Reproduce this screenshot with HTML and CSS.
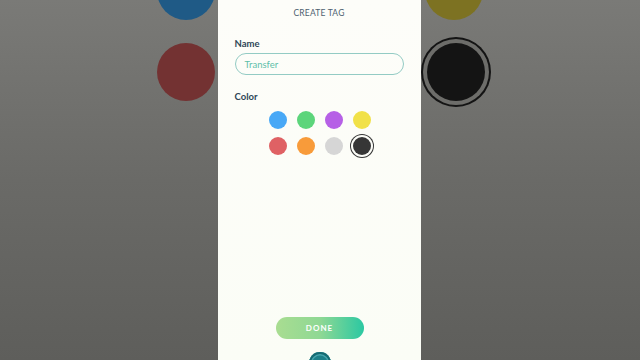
FILE: index.html
```html
<!DOCTYPE html>
<html>
<head>
<meta charset="utf-8">
<link rel="stylesheet" href="styles.css">
</head>
<body>
<div class="backdrop">
  <span class="bg-dot bg-blue"></span>
  <span class="bg-dot bg-red"></span>
  <span class="bg-dot bg-yellow"></span>
  <span class="bg-dot bg-black"></span>
</div>
<div class="sheet">
  <div class="title">CREATE TAG</div>
  <label class="label">Name</label>
  <div class="input">Transfer</div>
  <label class="label color-label">Color</label>
  <div class="swatches">
    <span class="sw blue"></span>
    <span class="sw green"></span>
    <span class="sw purple"></span>
    <span class="sw yellow"></span>
    <span class="sw red"></span>
    <span class="sw orange"></span>
    <span class="sw gray"></span>
    <span class="sw black selected"></span>
  </div>
  <div class="spacer"></div>
  <button class="done">DONE</button>
  <div class="bottom-btn"></div>
</div>
</body>
</html>
```
FILE: styles.css
```css
html, body {
  margin: 0;
  padding: 0;
  width: 640px;
  height: 360px;
  overflow: hidden;
}
body {
  background: linear-gradient(#7a7a77, #6a6a67 50%, #5e5e5b);
  font-family: Lato, "Noto Sans", sans-serif;
  display: flex;
  justify-content: center;
  position: relative;
}
.backdrop {
  position: absolute;
  inset: 0;
}
.bg-dot {
  position: absolute;
  width: 58px;
  height: 58px;
  border-radius: 50%;
}
.bg-blue { left: 157px; top: -38px; background: #1f5a86; }
.bg-red { left: 157px; top: 43px; background: #733232; }
.bg-yellow { left: 425px; top: -38px; background: #7d7222; }
.bg-black {
  left: 427px; top: 43px; background: #141414;
  box-shadow: 0 0 0 4px #6d6d6a, 0 0 0 6px #141414;
}
.sheet {
  position: relative;
  width: 203px;
  margin-left: -2px;
  height: 360px;
  background: linear-gradient(#fdfdf9, #fbfdf6);
  display: flex;
  flex-direction: column;
  box-sizing: border-box;
  padding: 0 17px;
}
.title {
  text-align: center;
  font-size: 8.5px;
  color: #4d6170;
  letter-spacing: 0.2px;
  margin-top: 8px;
  line-height: 11px;
}
.label {
  font-size: 9.5px;
  font-weight: 700;
  color: #2e4657;
  margin-top: 19px;
  line-height: 11px;
}
.color-label { margin-top: 16px; }
.input {
  margin-top: 4px;
  height: 22px;
  box-sizing: border-box;
  border: 1.5px solid #93cbc4;
  border-radius: 11px;
  font-size: 9.5px;
  color: #5fbfa9;
  padding-left: 9px;
  display: flex;
  align-items: center;
}
.swatches {
  display: grid;
  grid-template-columns: repeat(4, 18px);
  column-gap: 10px;
  row-gap: 8px;
  justify-content: center;
  margin-top: 9px;
  margin-left: 1px;
}
.sw {
  width: 18px;
  height: 18px;
  border-radius: 50%;
}
.blue { background: #48a8f6; }
.green { background: #5cd57b; }
.purple { background: #b660e6; }
.yellow { background: #f1e148; }
.red { background: #df6164; }
.orange { background: #f89b3a; }
.gray { background: #d6d6d6; }
.black {
  background: #363636;
  box-shadow: 0 0 0 2px #fcfdf8, 0 0 0 3px #363636;
}
.spacer { flex: 1; }
.done {
  align-self: center;
  width: 88px;
  height: 22px;
  border: none;
  border-radius: 11px;
  background: linear-gradient(90deg, #a9dd91, #8fd894 50%, #2bc8a2);
  color: #fff;
  font-family: Lato, "Noto Sans", sans-serif;
  font-weight: 700;
  font-size: 8px;
  letter-spacing: 1px;
  margin-left: 1px;
  padding: 0;
}
.bottom-btn {
  align-self: center;
  width: 22px;
  height: 22px;
  border-radius: 50%;
  background: #1e8089;
  box-shadow: inset 0 0 0 2px #166a72, inset 0 0 0 3.5px #46a5ad;
  margin-top: 13px;
  margin-bottom: -14px;
  margin-left: 1px;
}
```
